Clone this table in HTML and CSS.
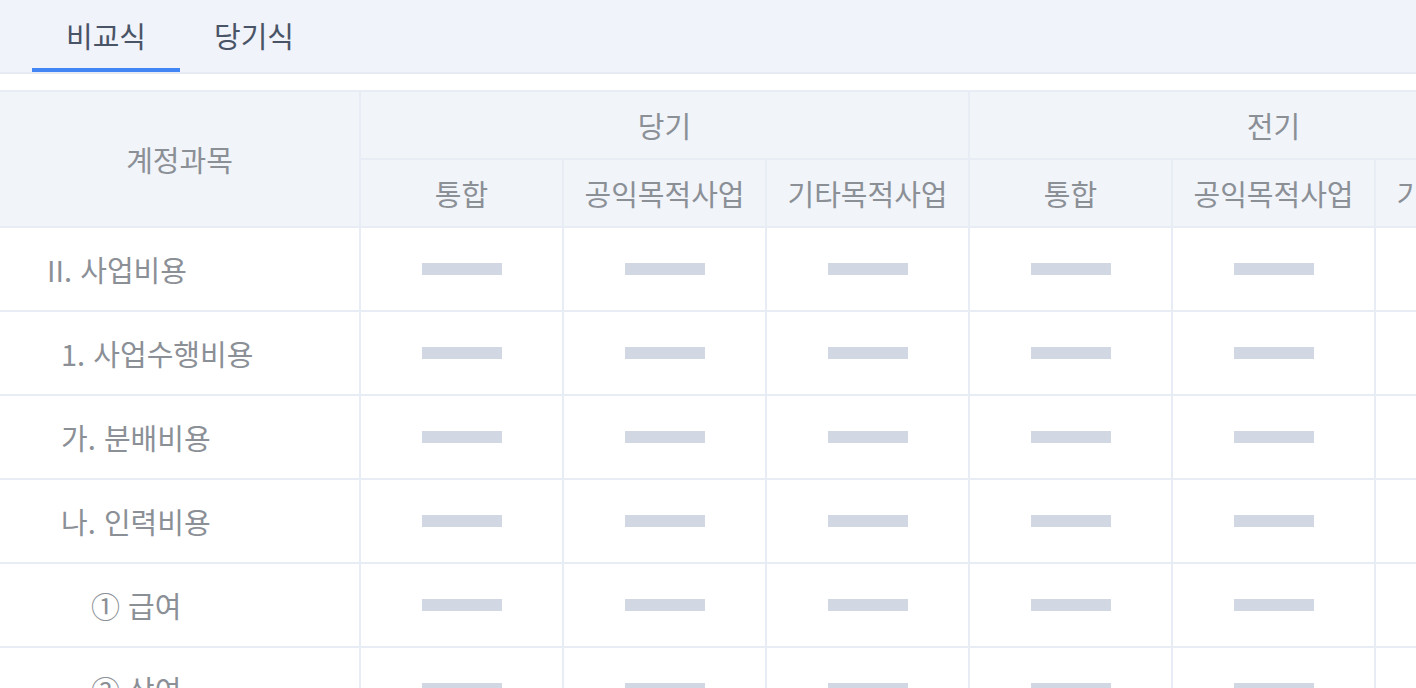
FILE: index.html
```html
<!DOCTYPE html>
<html lang="ko">

<head>
    <meta charset="UTF-8">
    <meta name="viewport" content="width=device-width, initial-scale=1.0">
    <title>비교식</title>
    <link rel="stylesheet" href="styles.css">
</head>

<body>
    <nav class="tabs">
        <a class="tab active">비교식</a>
        <a class="tab">당기식</a>
    </nav>

    <div class="table-wrap">
        <table class="report">
            <colgroup>
                <col class="col-name">
                <col class="col-num">
                <col class="col-num">
                <col class="col-num">
                <col class="col-num">
                <col class="col-num">
                <col class="col-num">
            </colgroup>
            <thead>
                <tr>
                    <th rowspan="2">계정과목</th>
                    <th colspan="3">당기</th>
                    <th colspan="3">전기</th>
                </tr>
                <tr>
                    <th>통합</th>
                    <th>공익목적사업</th>
                    <th>기타목적사업</th>
                    <th>통합</th>
                    <th>공익목적사업</th>
                    <th>기타목적사업</th>
                </tr>
            </thead>
            <tbody>
                <tr>
                    <td class="name lv1">II. 사업비용</td>
                    <td><span class="bar"></span></td><td><span class="bar"></span></td><td><span class="bar"></span></td>
                    <td><span class="bar"></span></td><td><span class="bar"></span></td><td><span class="bar"></span></td>
                </tr>
                <tr>
                    <td class="name lv2">1. 사업수행비용</td>
                    <td><span class="bar"></span></td><td><span class="bar"></span></td><td><span class="bar"></span></td>
                    <td><span class="bar"></span></td><td><span class="bar"></span></td><td><span class="bar"></span></td>
                </tr>
                <tr>
                    <td class="name lv2">가. 분배비용</td>
                    <td><span class="bar"></span></td><td><span class="bar"></span></td><td><span class="bar"></span></td>
                    <td><span class="bar"></span></td><td><span class="bar"></span></td><td><span class="bar"></span></td>
                </tr>
                <tr>
                    <td class="name lv2">나. 인력비용</td>
                    <td><span class="bar"></span></td><td><span class="bar"></span></td><td><span class="bar"></span></td>
                    <td><span class="bar"></span></td><td><span class="bar"></span></td><td><span class="bar"></span></td>
                </tr>
                <tr>
                    <td class="name lv3">① 급여</td>
                    <td><span class="bar"></span></td><td><span class="bar"></span></td><td><span class="bar"></span></td>
                    <td><span class="bar"></span></td><td><span class="bar"></span></td><td><span class="bar"></span></td>
                </tr>
                <tr>
                    <td class="name lv3">② 상여</td>
                    <td><span class="bar"></span></td><td><span class="bar"></span></td><td><span class="bar"></span></td>
                    <td><span class="bar"></span></td><td><span class="bar"></span></td><td><span class="bar"></span></td>
                </tr>
            </tbody>
        </table>
    </div>
</body>

</html>
```

FILE: styles.css
```css
body {
    margin: 0;
    font-family: "Noto Sans CJK KR", "Noto Sans", sans-serif;
    background-color: #ffffff;
    overflow: hidden;
}

.tabs {
    display: flex;
    height: 72px;
    padding-left: 32px;
    background-color: #f0f3f9;
    border-bottom: 2px solid #e6eaf3;
}

.tab {
    width: 148px;
    display: flex;
    align-items: center;
    justify-content: center;
    box-sizing: border-box;
    padding-top: 2px;
    border-bottom: 4px solid transparent;
    font-size: 29px;
    color: #4a5467;
    text-decoration: none;
}

.tab.active {
    border-bottom-color: #4285f4;
}

.table-wrap {
    margin-top: 16px;
    width: 100%;
    overflow: hidden;
}

.report {
    border-collapse: collapse;
    table-layout: fixed;
    width: 1578px;
}

.col-name {
    width: 360px;
}

.col-num {
    width: 203px;
}

.report th,
.report td {
    border: 2px solid #e8ecf5;
    font-size: 29px;
    font-weight: 400;
    line-height: 1.2;
    color: #8b8f96;
    text-align: center;
    padding: 0;
}

.report tr > :first-child {
    border-left: none;
}

.report thead th {
    background-color: #f1f4f9;
    height: 66px;
}

.report tbody td {
    height: 82px;
}

.report td.name {
    text-align: left;
}

.lv1 {
    padding-left: 47px !important;
}

.lv2 {
    padding-left: 61px !important;
}

.lv3 {
    padding-left: 91px !important;
}

.bar {
    display: block;
    margin: 0 auto;
    width: 80px;
    height: 12px;
    background-color: #d1d8e4;
}
```
